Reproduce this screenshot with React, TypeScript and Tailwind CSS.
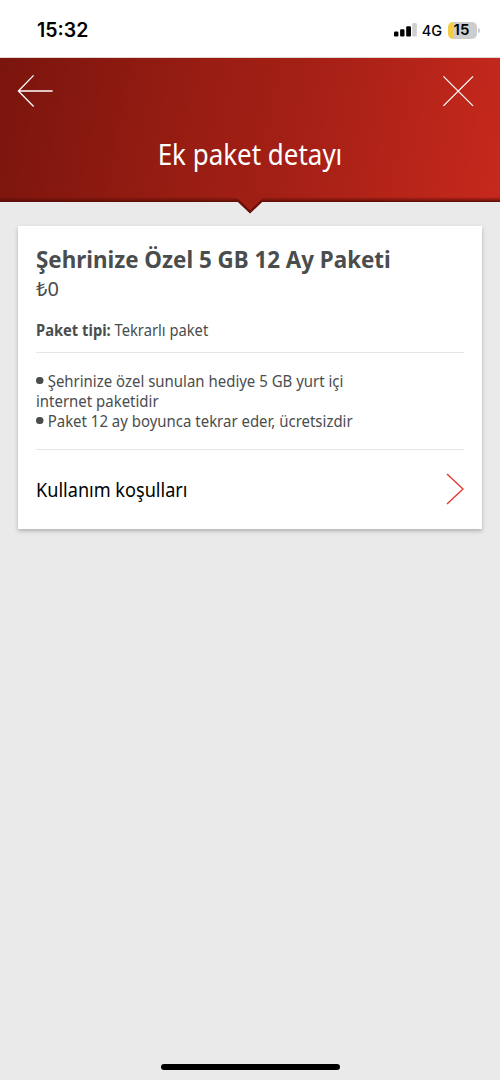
const details = [
  "Şehrinize özel sunulan hediye 5 GB yurt içi internet paketidir",
  "Paket 12 ay boyunca tekrar eder, ücretsizdir",
]

function StatusBar() {
  return (
    <div className="flex h-[57px] items-center justify-between bg-white pt-[4px] pr-[20px] pl-[37px] font-['Inter',sans-serif] text-black">
      <span className="text-[19.5px] font-semibold">15:32</span>
      <div className="flex items-center">
        <svg className="-mt-px" width="23" height="14" viewBox="0 0 23 14">
          <rect x="0" y="8.5" width="4.4" height="5" rx="1.2" />
          <rect x="6.1" y="6.3" width="4.4" height="7.2" rx="1.2" />
          <rect x="12.2" y="3.2" width="4.8" height="10.3" rx="1.2" />
          <rect x="18.2" y="0" width="4.6" height="13.5" rx="1.2" fill="#cfcfcf" />
        </svg>
        <span className="ml-[5px] text-[14.5px] font-medium">4G</span>
        <div className="ml-[6px] flex h-[17px] w-[29px] items-center justify-center rounded-[5px] bg-[linear-gradient(90deg,#f6cb45_4.5px,#cdcdcd_4.5px)] pr-[2px] text-[15px] font-semibold">
          15
        </div>
        <span className="ml-[1px] h-[5px] w-[2px] rounded-r-full bg-[#cdcdcd]" />
      </div>
    </div>
  )
}

function Header() {
  return (
    <header className="relative h-[145px] border-t border-[#e4d6d5] bg-[linear-gradient(101deg,#7a150d_0%,#991d13_40%,#a52016_60%,#c5281c_98%)] bg-clip-padding text-white">
      <div className="flex items-start justify-between pt-[16px] pr-[26px] pl-[17px]">
        <button aria-label="Geri">
          <svg width="36" height="34" viewBox="0 0 36 34" fill="none" stroke="currentColor" strokeWidth="1.3">
            <path d="M16.6 1.4 1.4 17l15.2 15.5M1.4 17h34.2" />
          </svg>
        </button>
        <button aria-label="Kapat">
          <svg width="32" height="34" viewBox="0 0 32 34" fill="none" stroke="currentColor" strokeWidth="1.3">
            <path d="m1.4 2.4 29.6 29.5M31 2.4 1.4 31.9" />
          </svg>
        </button>
      </div>
      <h1 className="mt-[26px] scale-x-[0.895] text-center text-[29px] leading-[40px] whitespace-nowrap">
        Ek paket detayı
      </h1>
      <div className="absolute inset-x-0 bottom-0 h-[5px] bg-linear-to-b from-transparent to-[#5a0d07]" />
      {/* pointer towards the card */}
      <svg className="absolute top-[138px] left-[236px]" width="28" height="18" viewBox="0 0 28 18">
        <path d="M2 6h24L14 17.5Z" fill="#5a0d07" />
        <path d="M0 1h28L14 14.5Z" fill="#9f1f15" />
        <path d="M1 4 14 16 27 4" fill="none" stroke="#6f120b" strokeWidth="1.6" />
      </svg>
    </header>
  )
}

function PackageCard() {
  return (
    <section className="mx-[18px] mt-[24px] h-[303px] bg-white px-[18px] pt-[17px] text-[#4a4d4e] shadow-[0_2px_4px_rgba(0,0,0,0.25)]">
      <h2 className="origin-left scale-x-[0.932] text-[24px] leading-[32px] font-bold whitespace-nowrap">
        Şehrinize Özel 5 GB 12 Ay Paketi
      </h2>
      <p className="mt-px text-[20px] leading-[26px]">₺0</p>
      <p className="mt-[17px] origin-left scale-x-[0.92] text-[16px] leading-[22px]">
        <b>Paket tipi:</b> Tekrarlı paket
      </p>
      <div className="mt-[11px] border-y border-[#e6e6e6] pt-[18px] pb-[18px]">
        <ul className="w-[350px] origin-left scale-x-[0.935] text-[16px] leading-[20px]">
          {details.map((text) => (
            <li key={text}>
              <span className="mr-[4.5px] inline-block h-[7.5px] w-[8px] rounded-full bg-[#4a4d4e] align-[3px]" />
              {text}
            </li>
          ))}
        </ul>
      </div>
      <button className="flex h-[78px] w-full items-center justify-between text-black">
        <span className="origin-left scale-x-[0.905] pt-px text-[20px] whitespace-nowrap">Kullanım koşulları</span>
        <svg width="18" height="32" viewBox="0 0 18 32" fill="none" stroke="#e03a30" strokeWidth="1.4">
          <path d="M1 1 17 16 1 31" />
        </svg>
      </button>
    </section>
  )
}

export default function App() {
  return (
    <main className="flex h-[1080px] w-[500px] flex-col overflow-hidden bg-[#eaeaea] font-['Noto_Sans',sans-serif]">
      <StatusBar />
      <Header />
      <PackageCard />
      <div className="mx-auto mt-auto mb-[10px] h-[6px] w-[179px] rounded-full bg-black" />
    </main>
  )
}
